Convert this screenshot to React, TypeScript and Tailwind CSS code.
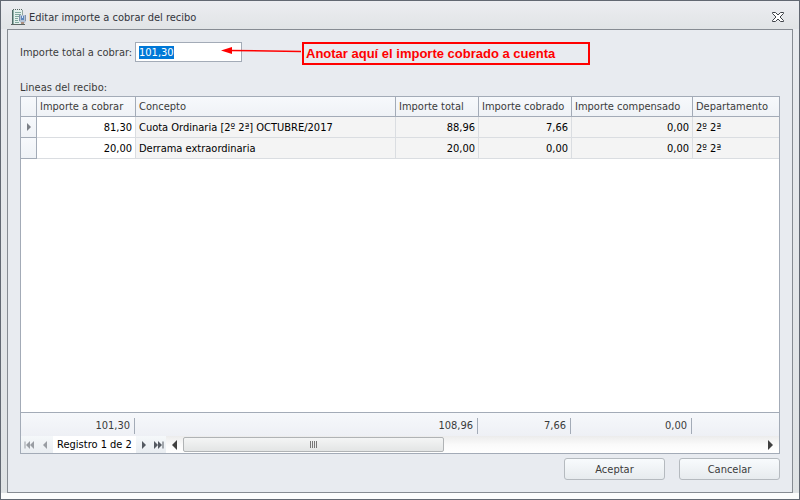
import { useEffect, useRef } from "react";

const rows = [
  { cobrar: "81,30", concepto: "Cuota Ordinaria [2º 2ª] OCTUBRE/2017", total: "88,96", cobrado: "7,66", compensado: "0,00", depto: "2º 2ª" },
  { cobrar: "20,00", concepto: "Derrama extraordinaria", total: "20,00", cobrado: "0,00", compensado: "0,00", depto: "2º 2ª" },
];

const th = "h-5 truncate border-r border-b border-[#a3abb7] bg-gradient-to-b from-[#f7f9fc] to-[#eff2f6] px-[3px] pt-px text-left font-normal text-[#3b3b3b] last:border-r-0";
const td = "h-[21px] truncate border-r border-b border-[#dadde1] bg-[#f4f4f4] px-[3px] pt-[2px] last:border-r-0";
const total = "mr-px h-4 border-r border-[#a3abb7] pr-1 text-right leading-4";
const navButton = "flex h-full items-center justify-center";
const action = "h-[22px] w-[101px] rounded-[3px] border border-[#b5babf] bg-gradient-to-b from-[#f8fbfd] to-[#e7ebee] pt-px text-[#3b3b3b]";

function ReceiptIcon() {
  return (
    <svg width="16" height="17" viewBox="0 0 16 17" aria-hidden="true">
      <path d="M2 1h10v14H2z" fill="#e4f1ed" />
      <path d="M1.500 1v14" stroke="#4f6b66" />
      <path d="M2.500 1v14" stroke="#8fb0a8" />
      <path d="M2 .500h10" stroke="#52645f" strokeDasharray="1 1" />
      <path d="M11.500 1v6" stroke="#8fa39e" />
      <path d="M4 3.500h6M4 5.500h6M4 7.500h4M4 9.500h3M4 11.500h3M4 13.500h4" stroke="#7fa89d" />
      <path d="M0 15.500h14" stroke="#5c6664" />
      <path d="M8 6h7v6l-1 2h-4l-2-2z" fill="#b4c3d6" />
      <path d="M8.500 6v6M14.500 6v6" stroke="#8193aa" />
      <path d="M10 7h3v4h-3z" fill="#5c87bd" />
      <path d="M11 7h1v2h-1z" fill="#dbe7f5" />
      <path d="M10 13h3v2h-3z" fill="#a98f80" />
    </svg>
  );
}

function Arrow({ left = false, double = false, color }: { left?: boolean; double?: boolean; color: string }) {
  return (
    <svg width={double ? 10 : 4} height="8" viewBox={double ? "0 0 10 8" : "0 0 4 8"} fill={color} aria-hidden="true">
      <g transform={left ? (double ? "matrix(-1 0 0 1 10 0)" : "matrix(-1 0 0 1 4 0)") : undefined}>
        <path d="M0 0l4 4-4 4z" />
        {double && <path d="M4 0l4 4-4 4zM8.500 0.500h1v7h-1z" />}
      </g>
    </svg>
  );
}

function ScrollArrow({ left = false }: { left?: boolean }) {
  return (
    <svg width="5" height="10" viewBox="0 0 5 10" fill="#404040" aria-hidden="true">
      <path d={left ? "M5 0v10L0 5z" : "M0 0v10l5-5z"} />
    </svg>
  );
}

export default function App() {
  const amount = useRef<HTMLInputElement>(null);
  useEffect(() => {
    amount.current?.focus();
    amount.current?.select();
  }, []);

  return (
    <div className="flex min-h-screen flex-col border border-[#626872] bg-gradient-to-b from-[#e9ebef] to-[#dfe2e4] font-['DejaVu_Sans_Condensed','DejaVu_Sans',sans-serif] text-[11px] leading-[14px] text-black">
      <header className="flex h-7 items-center justify-between bg-gradient-to-b from-[#ecedf1] to-[#e1e4e6] pt-1 pr-[15px] pl-[10px]">
        <div className="flex items-center gap-[2px]">
          <ReceiptIcon />
          <h1 className="pt-[2px] text-[#32343c]">Editar importe a cobrar del recibo</h1>
        </div>
        <button aria-label="Cerrar" className="flex">
          <svg width="12" height="10" viewBox="0 0 12 10" fill="#fff" stroke="#3f4349" aria-hidden="true">
            <path d="M.5.5h3L6 3 8.500.5h3v1L8 5l3.500 3.500v1h-3L6 7 3.500 9.500h-3v-1L4 5 .5 1.500z" />
          </svg>
        </button>
      </header>

      <main className="mx-[6px] flex flex-1 flex-col border border-[#868b92] bg-[#e8ebf0] px-3 pt-3 pb-3">
        <div className="relative flex h-5 items-center">
          <label htmlFor="importe" className="w-[115px] pt-px whitespace-nowrap text-[#3b3b3b]">Importe total a cobrar:</label>
          <input
            id="importe"
            ref={amount}
            defaultValue="101,30"
            className="h-5 w-[107px] border border-[#a3abb7] bg-white px-[3px] outline-none selection:bg-[#0078d7] selection:text-white"
          />
          <div className="absolute top-0 left-[200px] flex items-start">
            <svg width="82" height="20" viewBox="0 0 82 20" aria-hidden="true">
              <path d="M10 8.500L81 9.500" stroke="#f00" strokeWidth="1.500" />
              <path d="M1 8.500l11-3.500v7z" fill="#f00" />
            </svg>
            <p className="h-[23px] w-[288px] border-2 border-[#f00] pl-[2px] font-['Liberation_Sans',Arial,sans-serif] text-[13px] leading-5 font-bold whitespace-nowrap text-[#f00]">
              Anotar aquí el importe cobrado a cuenta
            </p>
          </div>
        </div>

        <h2 className="mt-[18px] mb-px pt-px text-[#3b3b3b]">Lineas del recibo:</h2>

        <section className="flex flex-1 flex-col border border-[#a3abb7] bg-white">
          <table className="w-full table-fixed border-separate border-spacing-0">
            <colgroup>
              <col className="w-[16px]" />
              <col className="w-[99px]" />
              <col />
              <col className="w-[83px]" />
              <col className="w-[93px]" />
              <col className="w-[121px]" />
              <col className="w-[86px]" />
            </colgroup>
            <thead>
              <tr>
                <th className={th} aria-label="Fila actual" />
                <th className={th}>Importe a cobrar</th>
                <th className={th}>Concepto</th>
                <th className={th}>Importe total</th>
                <th className={th}>Importe cobrado</th>
                <th className={th}>Importe compensado</th>
                <th className={th}>Departamento</th>
              </tr>
            </thead>
            <tbody>
              {rows.map((r, i) => (
                <tr key={r.concepto}>
                  <td className="h-[21px] border-r border-b border-[#a3abb7] bg-gradient-to-b from-[#f7f9fc] to-[#eff2f6] pl-[6px]">
                    {i === 0 && <Arrow color="#7c8087" />}
                  </td>
                  <td className="h-[21px] border-r border-b border-[#dadde1] bg-white px-[3px] pt-[2px] text-right">{r.cobrar}</td>
                  <td className={td}>{r.concepto}</td>
                  <td className={td + " text-right"}>{r.total}</td>
                  <td className={td + " text-right"}>{r.cobrado}</td>
                  <td className={td + " text-right"}>{r.compensado}</td>
                  <td className={td}>{r.depto}</td>
                </tr>
              ))}
            </tbody>
          </table>

          <div className="flex-1" />

          <div className="grid h-6 grid-cols-[115px_1fr_93px_121px_86px] items-center border-t border-[#a3abb7] bg-gradient-to-b from-[#f6f8fb] to-[#eef0f5] pt-[2px] text-[#3b3b3b]">
            <div className={total}>101,30</div>
            <div className={total}>108,96</div>
            <div className={total}>7,66</div>
            <div className={total}>0,00</div>
          </div>

          <div className="flex h-[17px] items-stretch bg-gradient-to-b from-[#ececec] via-[#fafafa] to-white">
            <nav aria-label="Registros" className="flex bg-gradient-to-b from-[#f5f8fa] to-[#e9edf1]">
              <button aria-label="Primero" className={navButton + " w-4"}><Arrow left double color="#999da3" /></button>
              <button aria-label="Anterior" className={navButton + " w-4"}><Arrow left color="#999da3" /></button>
              <span className="w-[83px] bg-white text-center leading-[18px] whitespace-nowrap">Registro 1 de 2</span>
              <button aria-label="Siguiente" className={navButton + " w-4"}><Arrow color="#555a62" /></button>
              <button aria-label="Último" className={navButton + " w-[14px]"}><Arrow double color="#555a62" /></button>
            </nav>
            <button aria-label="Desplazar a la izquierda" className="flex w-[17px] items-center justify-center"><ScrollArrow left /></button>
            <div className="flex-1 py-px">
              <div className="flex h-[15px] w-[45%] items-center justify-center gap-px rounded-[2px] border border-[#b0b3b5] bg-gradient-to-b from-[#f4f5f5] to-[#e3e5e5]">
                <i className="h-[7px] w-px bg-[#777]" />
                <i className="h-[7px] w-px bg-[#777]" />
                <i className="h-[7px] w-px bg-[#777]" />
                <i className="h-[7px] w-px bg-[#777]" />
              </div>
            </div>
            <button aria-label="Desplazar a la derecha" className="flex w-[17px] items-center justify-center"><ScrollArrow /></button>
          </div>
        </section>

        <div className="mt-1 flex justify-end gap-[14px]">
          <button className={action}>Aceptar</button>
          <button className={action}>Cancelar</button>
        </div>
      </main>
      <div className="h-[6px] bg-[#fcfcfc]" />
    </div>
  );
}
